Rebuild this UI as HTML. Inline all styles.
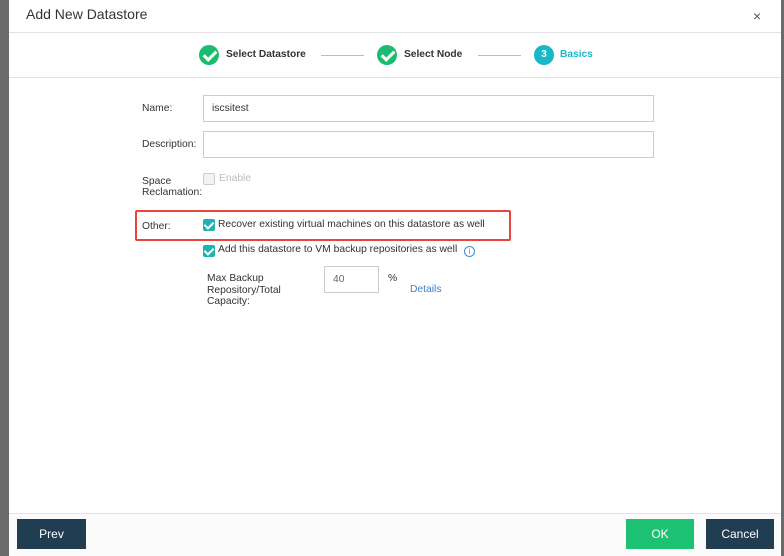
<!DOCTYPE html>
<html><head><style>
*{box-sizing:border-box;margin:0;padding:0}
body{width:784px;height:556px;background:#6b6b6b;font-family:"Liberation Sans",sans-serif;position:relative;overflow:hidden}
.dlg{position:absolute;left:9px;top:0;width:772px;height:556px;background:#fff}
.abs{position:absolute}
.lbl{font-size:10.3px;color:#333}
.inp{position:absolute;border:1px solid #ccc;background:#fff;font-size:10.3px;color:#333;padding:0 8px;display:flex;align-items:center}
.cb{position:absolute;width:12px;height:12px;border-radius:2px;background:#1fb3b3}
.cb:after{content:"";position:absolute;left:3px;top:1px;width:4px;height:7px;border:solid #fff;border-width:0 2px 2px 0;transform:rotate(45deg)}
.chk{position:absolute;width:20px;height:20px;border-radius:50%;background:#1cbc6f}
.chk:after{content:"";position:absolute;left:7px;top:3px;width:5px;height:10px;border:solid #fff;border-width:0 3px 3px 0;transform:rotate(45deg)}
.step{position:absolute;top:49px;font-size:10.2px;font-weight:bold;color:#333}
.btn{position:absolute;top:519px;height:30px;color:#fff;font-size:12px;display:flex;align-items:center;justify-content:center}
</style></head><body>
<div class="dlg">
 <div class="abs" style="left:17px;top:6px;font-size:14px;color:#333">Add New Datastore</div>
 <div class="abs" style="left:744px;top:8px;font-size:14px;color:#555">×</div>
 <div class="abs" style="left:0;top:32px;width:772px;height:1px;background:#e3e3e3"></div>
 <div class="chk" style="left:190px;top:45px"></div>
 <div class="step" style="left:217px">Select Datastore</div>
 <div class="abs" style="left:312px;top:55px;width:43px;height:1px;background:#bbb"></div>
 <div class="chk" style="left:368px;top:45px"></div>
 <div class="step" style="left:395px">Select Node</div>
 <div class="abs" style="left:469px;top:55px;width:43px;height:1px;background:#bbb"></div>
 <div class="abs" style="left:525px;top:45px;width:20px;height:20px;border-radius:50%;background:#1ab8c6;color:#fff;font-size:10px;font-weight:bold;text-align:center;line-height:20px">3</div>
 <div class="step" style="left:551px;color:#1ab8c6">Basics</div>
 <div class="abs" style="left:0;top:77px;width:772px;height:1px;background:#e3e3e3"></div>

 <div class="lbl abs" style="left:133px;top:103px">Name:</div>
 <div class="inp" style="left:194px;top:95px;width:451px;height:27px">iscsitest</div>
 <div class="lbl abs" style="left:133px;top:139px">Description:</div>
 <div class="inp" style="left:194px;top:131px;width:451px;height:27px"></div>
 <div class="lbl abs" style="left:133px;top:176px;line-height:11px">Space<br>Reclamation:</div>
 <div class="abs" style="left:194px;top:173px;width:12px;height:12px;border:1px solid #ccc;border-radius:2px;background:#f3f3f3"></div>
 <div class="abs" style="left:210px;top:173px;font-size:10.3px;color:#bbb">Enable</div>

 <div class="abs" style="left:126px;top:210px;width:376px;height:31px;border:2px solid #e8453c;border-radius:2px"></div>
 <div class="lbl abs" style="left:133px;top:221px">Other:</div>
 <div class="cb" style="left:194px;top:219px"></div>
 <div class="lbl abs" style="left:209px;top:219px">Recover existing virtual machines on this datastore as well</div>
 <div class="cb" style="left:194px;top:245px"></div>
 <div class="lbl abs" style="left:209px;top:244px">Add this datastore to VM backup repositories as well</div>
 <div class="abs" style="left:455px;top:246px;width:11px;height:11px;border:1px solid #3a8fd6;border-radius:50%;color:#3a8fd6;font-size:8px;text-align:center;line-height:9px">i</div>
 <div class="lbl abs" style="left:198px;top:273px;line-height:11.5px">Max Backup<br>Repository/Total<br>Capacity:</div>
 <div class="inp" style="left:315px;top:266px;width:55px;height:27px;color:#666">40</div>
 <div class="lbl abs" style="left:379px;top:273px">%</div>
 <div class="abs" style="left:401px;top:284px;font-size:10.3px;color:#3a7fc8">Details</div>

 <div class="abs" style="left:0;top:513px;width:772px;height:43px;background:#fbfbfb;border-top:1px solid #e3e3e3"></div>
 <div class="btn" style="left:8px;width:69px;background:#213d52">Prev</div>
 <div class="btn" style="left:617px;width:68px;background:#1cc172">OK</div>
 <div class="btn" style="left:697px;width:68px;background:#213d52">Cancel</div>
</div>
</body></html>
